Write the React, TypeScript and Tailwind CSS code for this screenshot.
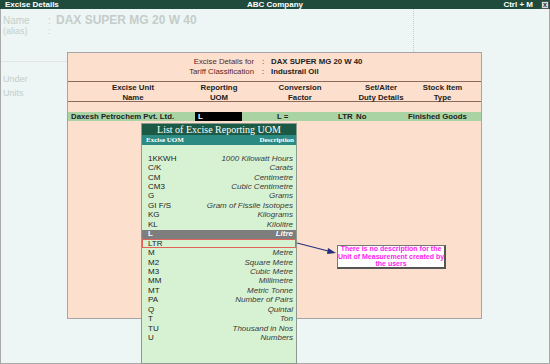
import React from "react";

const uoms: [string, string][] = [
  ["1KKWH", "1000 Kilowatt Hours"],
  ["C/K", "Carats"],
  ["CM", "Centimetre"],
  ["CM3", "Cubic Centimetre"],
  ["G", "Grams"],
  ["GI F/S", "Gram of Fissile Isotopes"],
  ["KG", "Kilograms"],
  ["KL", "Kilolitre"],
  ["L", "Litre"],
  ["LTR", ""],
  ["M", "Metre"],
  ["M2", "Square Metre"],
  ["M3", "Cubic Metre"],
  ["MM", "Millimetre"],
  ["MT", "Metric Tonne"],
  ["PA", "Number of Pairs"],
  ["Q", "Quintal"],
  ["T", "Ton"],
  ["TU", "Thousand in Nos"],
  ["U", "Numbers"],
];

const App: React.FC = () => {
  return (
    <div className="relative w-[550px] h-[364px] overflow-hidden bg-[#edf6f4] font-['Liberation_Sans',Arial,sans-serif]">
      {/* title bar */}
      <div className="flex items-center justify-between h-[9px] bg-[#1f4b3c] text-white text-[8px] font-bold leading-[9px]">
        <span className="pl-[5px] w-[200px]">Excise Details</span>
        <span>ABC Company</span>
        <div className="flex items-center justify-end w-[200px] gap-[8px] pr-[1px]">
          <span>Ctrl + M</span>
          <span className="flex items-center justify-center w-[8px] h-[8px] bg-[#d8dcd8] text-[#333] text-[7px] leading-none border border-[#555]">x</span>
        </div>
      </div>

      <div className="h-[355px] border-x border-b border-[#a9a9a9]">
        {/* faded master form */}
        <div className="flex h-[43px]">
          <div className="w-[413px] h-full border-r border-dotted border-[#c6cecc] pt-[4px] pl-[2px] text-[#c4cdcb]">
            <div className="flex items-center h-[14px]">
              <span className="w-[45px] text-[10px]">Name</span>
              <span className="w-[8px] text-[10px]">:</span>
              <span className="text-[12px] font-bold">DAX SUPER MG 20 W 40</span>
            </div>
            <div className="flex items-center h-[10px]">
              <span className="w-[45px] text-[9px]">(alias)</span>
              <span className="text-[9px]">:</span>
            </div>
          </div>
        </div>

        <div className="flex">
          <div className="w-[66px] pt-[9px] text-[9px] text-[#c4cdcb]">
            <div className="border-t border-[#dfe6e4] pt-[10px] pl-[2px] leading-[14px]">
              <div>Under</div>
              <div>Units</div>
            </div>
          </div>

          <div className="w-[415px] h-[267px] border border-[#a5a5a5] bg-[#fddfcd] text-[7.8px] text-[#222]">
            <div className="h-[28px] pt-[4px] leading-[10px]">
              <div className="flex">
                <span className="w-[186px] text-right text-[#5b1f22]">Excise Details for</span>
                <span className="w-[17px] pl-[8px]">:</span>
                <span className="font-bold">DAX SUPER MG 20 W 40</span>
              </div>
              <div className="flex">
                <span className="w-[186px] text-right text-[#5b1f22]">Tariff Classification</span>
                <span className="w-[17px] pl-[8px]">:</span>
                <span className="font-bold">Industrail Oil</span>
              </div>
            </div>
            <div className="h-[1px] bg-[#8c6a5a]" />
            <div className="grid grid-cols-[130px_42px_120px_42px_81px] h-[19px] pt-[1px] font-bold leading-[9.5px]">
              {[
                ["Excise Unit", "Name"],
                ["Reporting", "UOM"],
                ["Conversion", "Factor"],
                ["Set/Alter", "Duty Details"],
                ["Stock Item", "Type"],
              ].map(([a, b]) => (
                <div key={a} className="flex flex-col items-center whitespace-nowrap">
                  <span>{a}</span>
                  <span>{b}</span>
                </div>
              ))}
            </div>
            <div className="h-[1px] bg-[#8c6a5a]" />
            <div className="h-[10px]" />
            <div className="flex items-center h-[9px] bg-[#a9d3a2] font-bold leading-[9px] whitespace-nowrap">
              <span className="w-[127px] pl-[3px]">Daxesh Petrochem Pvt. Ltd.</span>
              <span className="w-[47px] h-[9px] bg-black text-white pl-[3px]">L</span>
              <span className="w-[35px]" />
              <span className="w-[61px]">L =</span>
              <span className="w-[18px]">LTR</span>
              <span className="w-[52px]">No</span>
              <span>Finished Goods</span>
            </div>
          </div>
        </div>
      </div>

      {/* popup list */}
      <div className="absolute left-[141px] top-[123px] w-[156px] h-[241px] border border-[#8d9a8f] bg-[#d6f2d3]">
        <div className="flex items-center justify-center h-[11px] bg-[#1c5a45] text-white text-[10px] leading-none font-['Liberation_Serif',serif]">
          List of Excise Reporting UOM
        </div>
        <div className="flex items-center justify-between h-[10px] pl-[4px] pr-[2px] bg-[#2b8a82] text-white text-[7px] font-bold leading-none font-['Liberation_Serif',serif]">
          <span>Excise UOM</span>
          <span>Description</span>
        </div>
        <div className="h-[9px]" />
        {uoms.map(([code, desc]) => {
          const sel = code === "L";
          const ltr = code === "LTR";
          return (
            <div
              key={code}
              className={
                sel
                  ? "flex items-center justify-between h-[9.45px] pl-[6px] pr-[3px] bg-[#7e7e7e] text-white font-bold text-[8px] leading-none"
                  : ltr
                  ? "flex items-center justify-between h-[9.45px] pl-[5px] pr-[3px] border border-[#e0625a] text-[#222] text-[8px] leading-none"
                  : "flex items-center justify-between h-[9.45px] pl-[6px] pr-[3px] text-[#222] text-[8px] leading-none"
              }
            >
              <span>{code}</span>
              <span className={sel ? "italic" : "italic text-[#3a3a3a]"}>{desc}</span>
            </div>
          );
        })}
      </div>

      {/* arrow */}
      <svg className="absolute left-[296px] top-[240px]" width="42" height="16" viewBox="0 0 42 16">
        <line x1="1" y1="3" x2="36" y2="12" stroke="#25307a" strokeWidth="1.2" />
        <polygon points="40,13 32,8 31,14" fill="#25307a" />
      </svg>

      {/* callout */}
      <div className="absolute left-[337px] top-[245px] w-[109px] h-[24px] bg-white border border-[#777] border-r-2 border-b-2 border-r-[#555] border-b-[#555] flex flex-col items-center justify-center text-[#ff22f0] text-[7px] font-bold leading-[7.5px] whitespace-nowrap">
        <span>There is no description for the</span>
        <span>Unit of Measurement created by</span>
        <span>the users</span>
      </div>
    </div>
  );
};

export default App;
